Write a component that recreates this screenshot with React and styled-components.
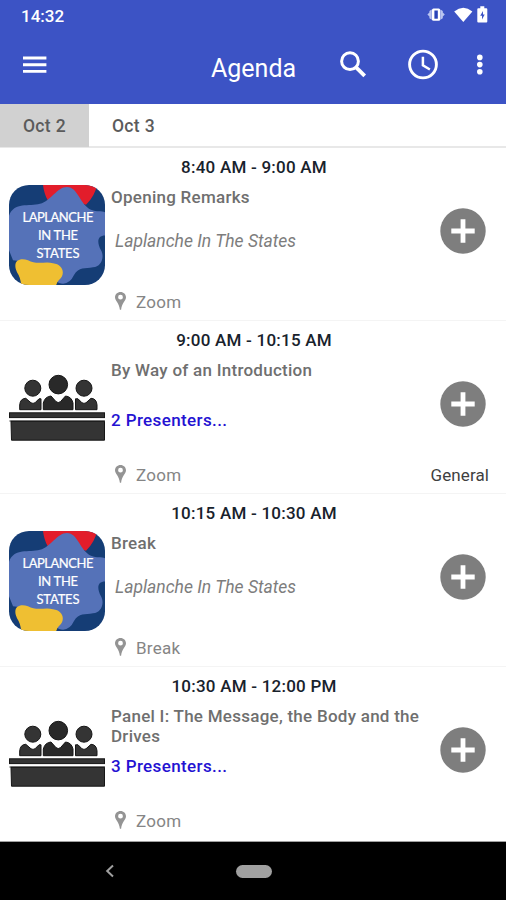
import React from "react";
import styled, { createGlobalStyle } from "styled-components";

const GlobalStyle = createGlobalStyle`
  * { box-sizing: border-box; }
  body { margin: 0; background: #fff; font-family: Roboto, sans-serif; }
`;

const Screen = styled.div`
  width: 506px;
  height: 900px;
  display: flex;
  flex-direction: column;
  overflow: hidden;
  background: #fff;
`;

const Header = styled.header`
  height: 104px;
  flex: none;
  background: #3c53c5;
  color: #fff;
`;

const StatusBar = styled.div`
  height: 32px;
  padding: 0 17px 0 21px;
  display: flex;
  align-items: center;
  justify-content: space-between;
`;

const Clock = styled.span`
  font-size: 17px;
  font-weight: 500;
  line-height: 32px;
  letter-spacing: 0;
`;

const StatusIcons = styled.div`
  display: flex;
  padding-bottom: 2px;
`;

const AppBar = styled.div`
  height: 66px;
  display: grid;
  grid-template-columns: 211px 126px 70px 59px 1fr;
  align-items: center;
`;

const BarButton = styled.button`
  border: 0;
  padding: 0;
  margin: 0 0 0 ${(p) => p.$inset}px;
  background: none;
  color: inherit;
  display: flex;
`;

const Heading = styled.h1`
  margin: 7px 0 0;
  font-size: 25px;
  line-height: 30px;
  font-weight: 400;
  letter-spacing: 0;
`;

const Tabs = styled.nav`
  height: 44px;
  flex: none;
  display: flex;
  border-bottom: 2px solid #e8e8e8;
`;

const Tab = styled.button`
  border: 0;
  width: 89px;
  height: 43px;
  padding: 1px 0 0;
  background: ${(p) => (p.$active ? "#d1d1d1" : "transparent")};
  color: #5b5b5b;
  font: 500 17.5px/43px Roboto, sans-serif;
  letter-spacing: 0.35px;
`;

const List = styled.main`
  height: 693px;
  flex: none;
  overflow: hidden;
`;

const Session = styled.article`
  height: 173px;
  display: grid;
  grid-template-columns: 111px 320px minmax(0, 1fr);
  grid-template-rows: 37px 1fr;
  border-bottom: 1px solid #f4f4f4;
  &:last-child { border-bottom-color: transparent; }
`;

const Time = styled.div`
  grid-column: 1 / -1;
  padding-left: 2px;
  text-align: center;
  color: #18222c;
  font-size: 17px;
  font-weight: 500;
  line-height: 38px;
  letter-spacing: 0.23px;
`;

const Thumb = styled.div`
  padding-left: 9px;
  svg { display: block; }
`;

const Info = styled.div`
  display: grid;
  grid-template-rows: 43px 59px 1fr;
`;

const Title = styled.h2`
  margin: 0;
  padding-top: 2px;
  font-size: 17px;
  font-weight: 500;
  line-height: 20px;
  letter-spacing: 0.26px;
  color: #6f6f6f;
`;

const Host = styled.p`
  margin: 0;
  padding: 3px 0 0 4px;
  font-size: 17.5px;
  font-style: italic;
  line-height: 20px;
  letter-spacing: 0;
  color: #7d7d7d;
`;

const Presenters = styled.a`
  padding-top: 9px;
  font-size: 17px;
  font-weight: 500;
  line-height: 20px;
  letter-spacing: 0.38px;
  color: #2412d2;
`;

const Place = styled.div`
  display: flex;
  align-items: center;
  height: 29px;
  padding-left: 4px;
  gap: 9px;
  font-size: 17px;
  letter-spacing: 0.25px;
  color: #858585;
`;

const Side = styled.div`
  display: grid;
  grid-template-columns: minmax(0, 1fr);
  grid-template-rows: 103px 29px;
  justify-items: end;
`;

const AddButton = styled.button`
  border: 0;
  padding: 0;
  margin: 23px 20.5px 0 0;
  width: 46px;
  height: 46px;
  border-radius: 50%;
  background: none;
`;

const Track = styled.span`
  padding-right: 17px;
  font-size: 17px;
  line-height: 29px;
  letter-spacing: 0.1px;
  color: #3f3f3f;
`;

const NavBar = styled.footer`
  flex: 1;
  display: flex;
  align-items: center;
  padding-left: 105px;
  background: #000;
  border-top: 1px solid #a0a0a0;
`;

const HomePill = styled.div`
  width: 36px;
  height: 13px;
  margin-left: 121px;
  border-radius: 7px;
  background: #a0a0a0;
`;

const LogoText = styled.text`
  font-family: Lato, sans-serif;
  font-size: 13px;
  font-weight: 400;
  fill: #fff;
  stroke: #fff;
  stroke-width: 0.2px;
`;

function StatusGlyphs() {
  return (
    <svg width="62" height="20" viewBox="0 0 62 20" fill="#fff">
      <path d="M4.8 4.4V14.8L2.4 13.2V11.6L.4 9.6L2.4 7.6V6ZM13.4 4.4V14.8L15.8 13.2V11.6L17.8 9.6L15.8 7.6V6Z" fill="#b9c4f0" />
      <rect x="5" y="3.4" width="8.2" height="12.4" rx="1.5" />
      <rect x="7.4" y="5.5" width="3.4" height="8.2" fill="#2944b8" />
      <path d="M27.2 6.4Q36.3-1 45.4 6.4L36.3 17Z" />
      <path d="M51.3 3.2h2V1.3h4v1.9h2q1 0 1 1v12.2q0 1-1 1h-8q-1 0-1-1V4.2q0-1 1-1Z" />
      <path d="M56 6 53.2 10.8h1.8v3.8l2.7-5h-1.7Z" fill="#3c53c5" />
    </svg>
  );
}

function ConferenceLogo() {
  return (
    <svg width="96" height="100" viewBox="0 0 96 101" preserveAspectRatio="none">
      <defs>
        <clipPath id="tile"><rect width="96" height="101" rx="20" /></clipPath>
      </defs>
      <g clipPath="url(#tile)">
        <rect width="96" height="101" fill="#153d75" />
        <path d="M34 0H88Q86 11 77 20L53 12 39 16Q35 9 34 0Z" fill="#e21d2b" />
        <path d="M0 31C5 17 20 22 31 19C42 16 48 2 58 2C69 2 71 20 82 25C89 28 95 25 98 29V51C89 50 87 56 92 66C96 73 92 83 84 83C76 85 70 82 65 91Q60 102 50 99L20 78L4 76L0 66Z" fill="#5572b8" />
        <path d="M12 101Q12 94 8 88C3 77 10 73 19 76C27 81 36 77 44 79C54 80 57 90 50 96Q47 99 47 103H12Z" fill="#efbf32" />
      </g>
      <LogoText x="49" y="37.7" textAnchor="middle" textLength="71">LAPLANCHE</LogoText>
      <LogoText x="49" y="55.5" textAnchor="middle" textLength="40">IN THE</LogoText>
      <LogoText x="49" y="73.3" textAnchor="middle" textLength="43">STATES</LogoText>
    </svg>
  );
}

function PanelPicture() {
  return (
    <svg width="96" height="101" viewBox="0 0 96 101" fill="#343434" stroke="#161616" strokeWidth="1">
      <circle cx="23.8" cy="30.2" r="8" />
      <circle cx="75" cy="30.2" r="8" />
      <circle cx="49.3" cy="26.6" r="9.3" fill="#292929" />
      <path d="M10.7 51.7V47Q11.2 40.5 16.8 40.3L22 44.8Q24 46 26 44.8L30 40.8H32V51.7Z" />
      <path d="M88 51.7V47Q87.5 40.5 82 40.3L77 44.8Q75 46 73 44.8L69 40.8H66.5V51.7Z" />
      <path d="M34.3 51.7V45Q36 38.5 42 38L47 43.6Q49.2 45.6 51.5 43.6L56.5 38Q62.5 38.5 64 45V51.7Z" fill="#292929" />
      <rect x=".5" y="54.8" width="95" height="4.8" />
      <path d="M2 63.3H95.5V82.2H2.5Z" />
      <path d="M.5 63H96" />
    </svg>
  );
}

function Pin() {
  return (
    <svg width="12" height="20" viewBox="0 0 12 20">
      <path fillRule="evenodd" fill="#949494" d="M5.5 0C2.4 0 0 2.3 0 5.2C0 8.7 4.3 10.7 4.9 17.8H6.1C6.7 10.7 11 8.7 11 5.2C11 2.3 8.6 0 5.5 0ZM5.5 2.8A2.4 2.4 0 1 1 5.5 7.6A2.4 2.4 0 1 1 5.5 2.8Z" />
    </svg>
  );
}

function Plus() {
  return (
    <svg width="46" height="46" viewBox="0 0 46 46">
      <circle cx="23" cy="23" r="22.7" fill="#7e7e7e" />
      <path d="M11.3 23H34.7M23 11.3V34.7" stroke="#fff" strokeWidth="4.8" />
    </svg>
  );
}

const sessions = [
  { time: "8:40 AM - 9:00 AM", title: "Opening Remarks", host: "Laplanche In The States", place: "Zoom" },
  { time: "9:00 AM - 10:15 AM", title: "By Way of an Introduction", presenters: 2, place: "Zoom", track: "General" },
  { time: "10:15 AM - 10:30 AM", title: "Break", host: "Laplanche In The States", place: "Break" },
  { time: "10:30 AM - 12:00 PM", title: "Panel I: The Message, the Body and the Drives", presenters: 3, place: "Zoom" },
];

export default function App() {
  return (
    <Screen>
      <GlobalStyle />
      <Header>
        <StatusBar>
          <Clock>14:32</Clock>
          <StatusIcons><StatusGlyphs /></StatusIcons>
        </StatusBar>
        <AppBar>
          <BarButton $inset={23} aria-label="Menu">
            <svg width="24" height="20" viewBox="0 0 24 20">
              <path d="M0 3h23.4M0 9.7h23.4M0 16.4h23.4" stroke="#fff" strokeWidth="2.9" />
            </svg>
          </BarButton>
          <Heading>Agenda</Heading>
          <BarButton $inset={2} aria-label="Search">
            <svg width="28" height="28" viewBox="0 0 28 28" fill="none" stroke="#fff">
              <circle cx="11" cy="10.2" r="8.4" strokeWidth="3" />
              <path d="m16.6 15.8 9.1 9.1" strokeWidth="3.8" />
            </svg>
          </BarButton>
          <BarButton $inset={0} aria-label="Schedule">
            <svg width="32" height="32" viewBox="0 0 32 32" fill="none" stroke="#fff">
              <circle cx="16" cy="15.5" r="13.4" strokeWidth="2.9" />
              <path d="M15.9 7.8v8.6l7 4.1" strokeWidth="2.5" />
            </svg>
          </BarButton>
          <BarButton $inset={10} aria-label="More">
            <svg width="8" height="22" viewBox="0 0 8 22" fill="#fff">
              <circle cx="3.8" cy="3.4" r="2.8" />
              <circle cx="3.8" cy="10.6" r="2.8" />
              <circle cx="3.8" cy="17.8" r="2.8" />
            </svg>
          </BarButton>
        </AppBar>
      </Header>
      <Tabs>
        <Tab $active>Oct 2</Tab>
        <Tab>Oct 3</Tab>
      </Tabs>
      <List>
        {sessions.map((s) => (
          <Session key={s.time}>
            <Time>{s.time}</Time>
            <Thumb>{s.host ? <ConferenceLogo /> : <PanelPicture />}</Thumb>
            <Info>
              <Title>{s.title}</Title>
              {s.host ? <Host>{s.host}</Host> : <Presenters>{s.presenters} Presenters...</Presenters>}
              <Place><Pin />{s.place}</Place>
            </Info>
            <Side>
              <AddButton aria-label="Add"><Plus /></AddButton>
              {s.track && <Track>{s.track}</Track>}
            </Side>
          </Session>
        ))}
      </List>
      <NavBar>
        <svg width="10" height="14" viewBox="0 0 10 14" fill="none">
          <path d="M8 1.5 2.2 7 8 12.5" stroke="#a0a0a0" strokeWidth="2" />
        </svg>
        <HomePill />
      </NavBar>
    </Screen>
  );
}
